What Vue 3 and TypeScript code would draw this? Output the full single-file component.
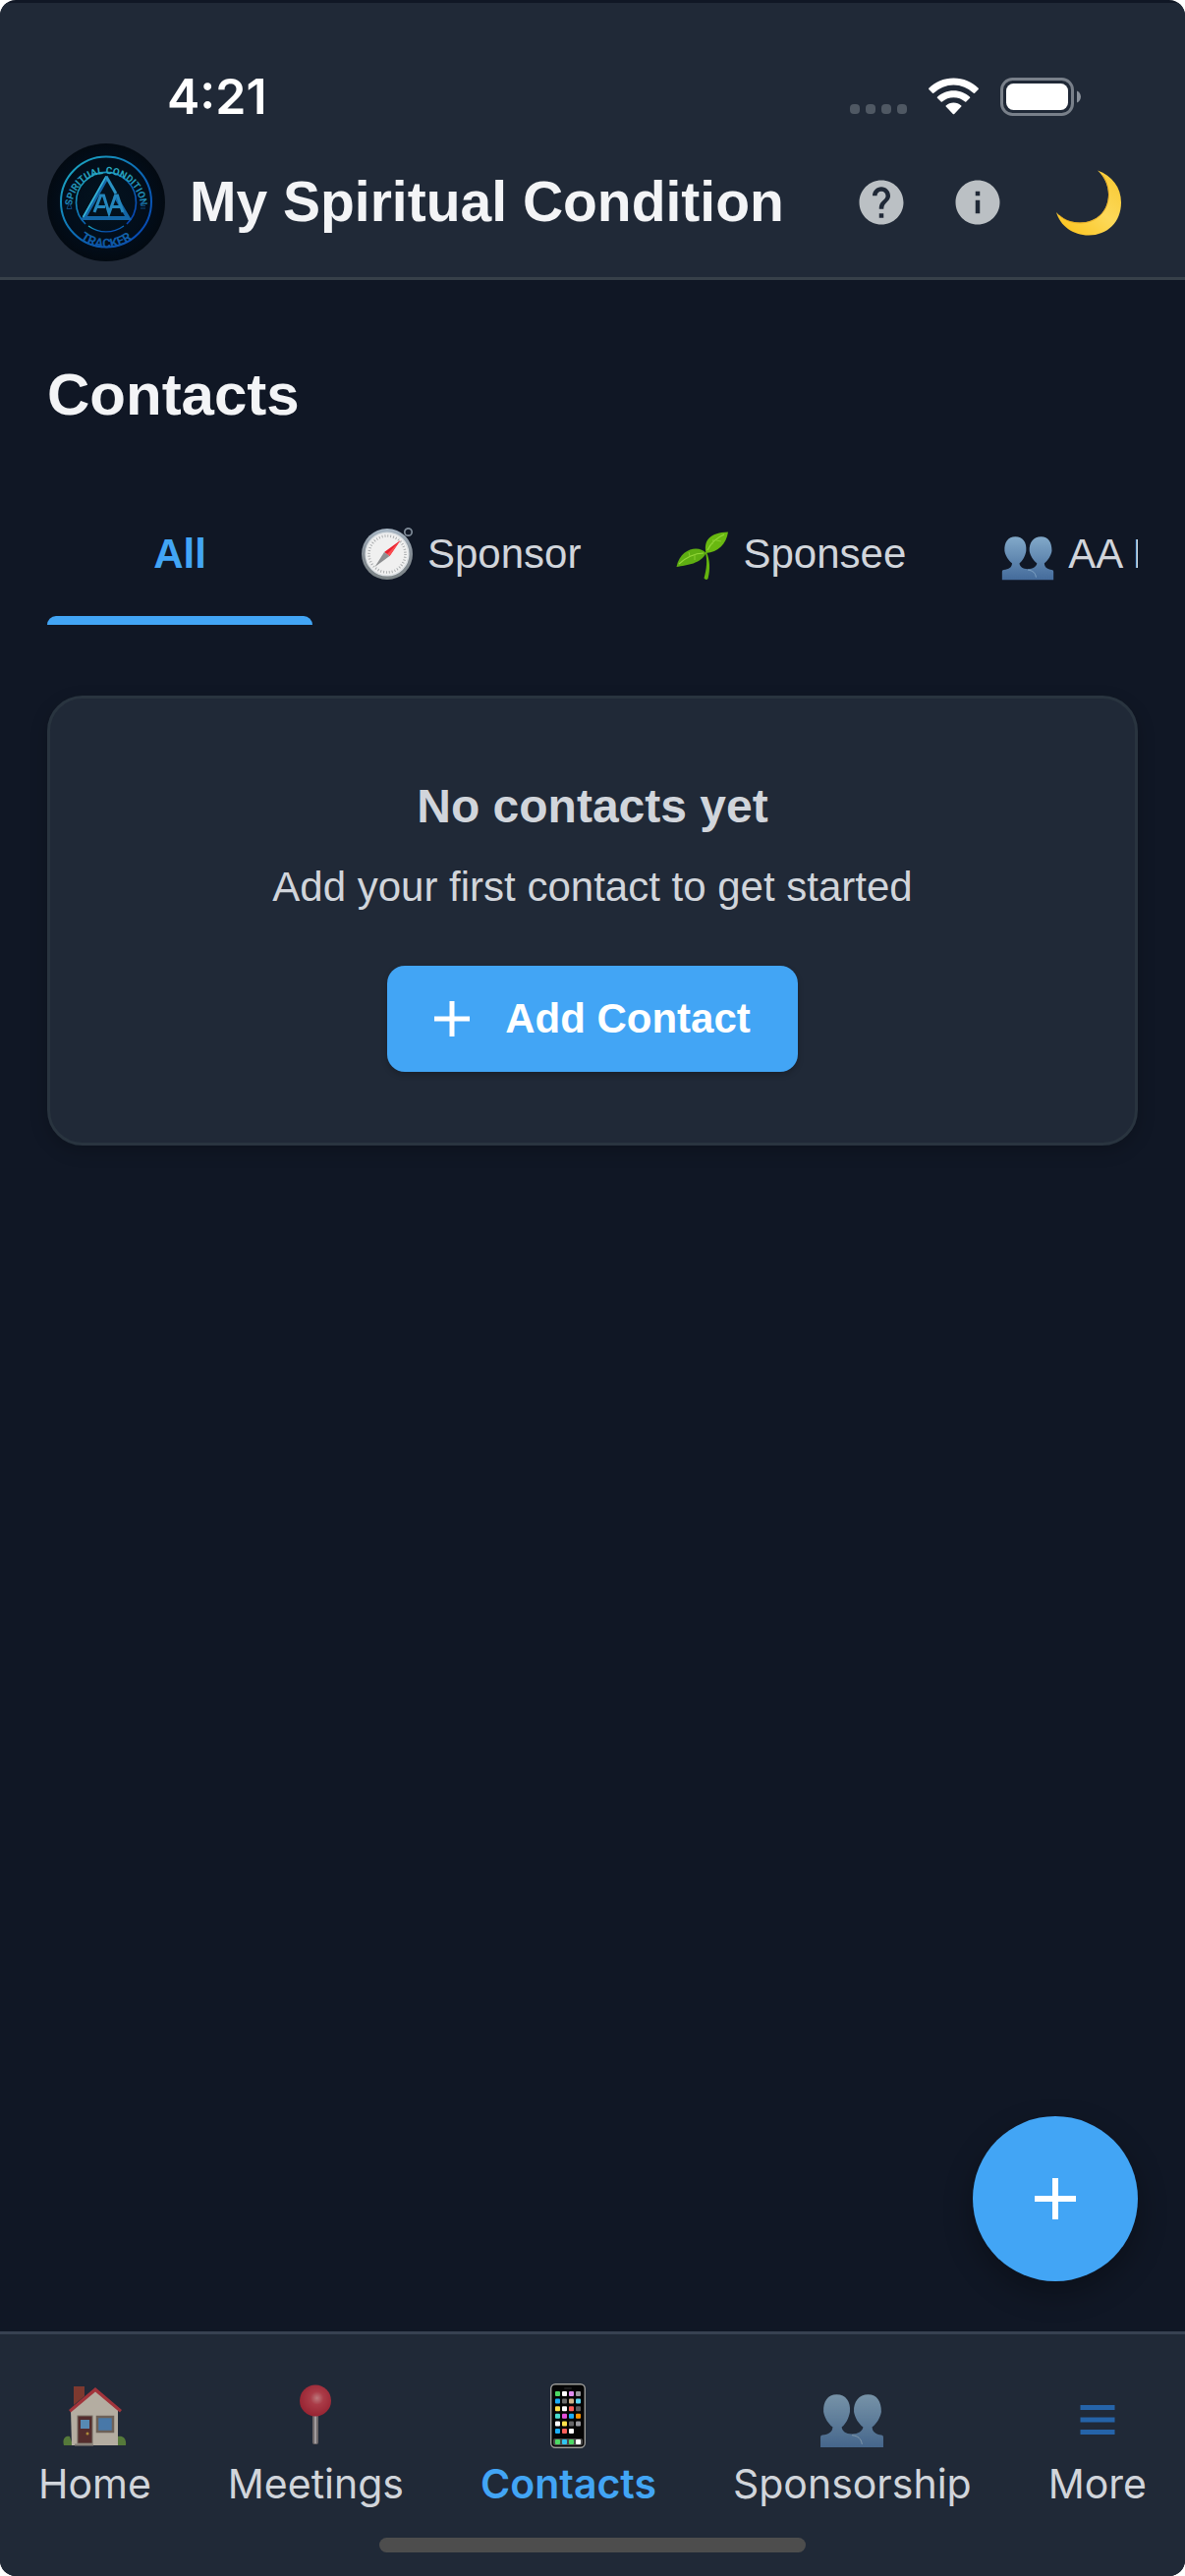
<script setup lang="ts">
import { ref } from 'vue'

interface Tab {
  id: string
  label: string
}

const tabs: Tab[] = [
  { id: 'all', label: 'All' },
  { id: 'sponsor', label: 'Sponsor' },
  { id: 'sponsee', label: 'Sponsee' },
  { id: 'member', label: 'AA Member' },
]

const navItems: Tab[] = [
  { id: 'home', label: 'Home' },
  { id: 'meetings', label: 'Meetings' },
  { id: 'contacts', label: 'Contacts' },
  { id: 'sponsorship', label: 'Sponsorship' },
  { id: 'more', label: 'More' },
]

const activeTab = ref('all')
const activePage = ref('contacts')

// Colours of the app tiles on the phone icon, row by row
const phoneRows: string[][] = [
  ['#4cd964', '#ffffff', '#e08cf0', '#98989d'],
  ['#1badf8', '#6b6b6b', '#d2b48c', '#5ad4f0'],
  ['#ffe14a', '#ffffff', '#ff5f5a', '#5c5c5e'],
  ['#4adfd0', '#e54fdc', '#1badf8', '#ff9500'],
  ['#ffffff', '#ffe14a', '#666668', '#98989d'],
  ['#1badf8', '#ff5f5a', '#ffffff'],
]
const phoneDock: string[] = ['#4cd964', '#30c4f0', '#4cd964', '#ffffff']
</script>

<template>
  <div class="app">
    <header class="header">
      <div class="status">
        <span class="clock">4:21</span>
        <div class="status-icons">
          <svg class="dots" viewBox="0 0 58 38" aria-hidden="true">
            <rect v-for="n in 4" :key="n" :x="(n - 1) * 16" y="27" width="10" height="10" rx="4" fill="#4f5863" />
          </svg>
          <svg class="wifi" viewBox="0 0 51 38" fill="#fff" aria-hidden="true">
            <path d="M25.500 0.500C35.500 0.500 44.300 4.400 50.700 10.700Q51.200 11.300 50.700 11.900L47 15.700Q46.400 16.200 45.800 15.700A29.500 29.500 0 0 0 5.200 15.700Q4.600 16.200 4 15.700L0.300 11.900Q-.2 11.300 .3 10.700C6.700 4.400 15.500 .5 25.500 .5Z" />
            <path d="M25.500 13.200C32 13.200 37.800 15.700 42.100 19.700Q42.600 20.200 42.100 20.800L38.300 24.600Q37.700 25.100 37.100 24.600A17.600 17.600 0 0 0 13.900 24.600Q13.300 25.100 12.700 24.600L8.900 20.800Q8.400 20.200 8.900 19.700C13.200 15.700 19 13.200 25.500 13.200Z" />
            <path d="M25.500 25.500C28.500 25.500 31.200 26.600 33.300 28.400Q33.900 29 33.300 29.600L26.200 36.900Q25.500 37.500 24.800 36.900L17.700 29.600Q17.100 29 17.700 28.400C19.800 26.600 22.500 25.500 25.500 25.500Z" />
          </svg>
          <svg class="battery" viewBox="0 0 82 39" aria-hidden="true">
            <rect x="1.500" y="1.500" width="72" height="36" rx="11" fill="none" stroke="#79808a" stroke-width="3" />
            <rect x="6" y="6" width="63" height="27" rx="7.500" fill="#fff" />
            <path d="M78 13.500C83.300 15.500 83.300 23.500 78 25.500Z" fill="#8a919b" />
          </svg>
        </div>
      </div>
      <div class="brand-row">
        <svg class="logo" viewBox="0 0 120 120" role="img" aria-label="Spiritual Condition Tracker">
          <defs>
            <radialGradient id="disc">
              <stop offset="0" stop-color="#03131f" />
              <stop offset=".75" stop-color="#020d1a" />
              <stop offset="1" stop-color="#030a12" />
            </radialGradient>
            <linearGradient id="ring" x1="0" y1="0" x2="1" y2="1">
              <stop offset="0" stop-color="#1fb2c4" />
              <stop offset=".55" stop-color="#0b66b4" />
              <stop offset="1" stop-color="#0640b4" />
            </linearGradient>
            <linearGradient id="lettering" gradientUnits="userSpaceOnUse" x1="0" y1="20" x2="0" y2="104">
              <stop offset="0" stop-color="#2cb0c2" />
              <stop offset="1" stop-color="#0e55a4" />
            </linearGradient>
            <path id="top-arc" d="M25 66A35 35 0 1 1 95 66" />
            <path id="bottom-arc" d="M17.500 72A43.500 43.500 0 0 0 102.500 72" />
          </defs>
          <circle cx="60" cy="60" r="60" fill="url(#disc)" />
          <circle cx="60" cy="59.500" r="46" fill="none" stroke="url(#ring)" stroke-width="2" />
          <path d="M39 82A30.500 30.500 0 1 1 81 82" fill="none" stroke="url(#ring)" stroke-width="1.600" />
          <path d="M42 84A30.500 30.500 0 0 0 78 84" fill="none" stroke="url(#ring)" stroke-width="1.400" />
          <text class="seal seal-top" fill="url(#lettering)" text-anchor="middle">
            <textPath href="#top-arc" startOffset="50%">SPIRITUAL CONDITION</textPath>
          </text>
          <text class="seal seal-bottom" fill="url(#lettering)" text-anchor="middle">
            <textPath href="#bottom-arc" startOffset="50%">TRACKER</textPath>
          </text>
          <path d="M60 36L37.500 76H82.500L69 53" fill="none" stroke="#1466a6" stroke-width="4" stroke-linejoin="miter" />
          <path d="M60 33.500L36.500 75" fill="none" stroke="#35b4d6" stroke-width="1.600" />
          <path d="M60 33.500L70 51" fill="none" stroke="#2a93c4" stroke-width="3" />
          <path d="M48 70L54.500 53H57.500L63 71L69.500 53H71.500L77 70M51 64.500H59M66 64.500H75" fill="none" stroke="#2487bd" stroke-width="3" />
          <path d="M20 66.500L22.500 60L25 66.500ZM95 61H100M95 63.500H100M95 66H100" fill="none" stroke="#0d477c" />
        </svg>
        <p class="brand">My Spiritual Condition</p>
        <div class="actions">
          <button class="icon-btn" type="button" aria-label="Help">
            <svg class="glyph" viewBox="0 0 24 24" fill="#bbc0c4">
              <path d="M12 2C6.480 2 2 6.480 2 12s4.480 10 10 10 10-4.480 10-10S17.520 2 12 2zm1 17h-2v-2h2v2zm2.070-7.750l-.9.920C13.450 12.900 13 13.500 13 15h-2v-.5c0-1.100.450-2.100 1.170-2.830l1.240-1.260c.370-.360.590-.860.590-1.410 0-1.100-.9-2-2-2s-2 .9-2 2H8c0-2.210 1.790-4 4-4s4 1.790 4 4c0 .880-.360 1.680-.930 2.250z" />
            </svg>
          </button>
          <button class="icon-btn" type="button" aria-label="About">
            <svg class="glyph" viewBox="0 0 24 24" fill="#bbc0c4">
              <path d="M12 2C6.480 2 2 6.480 2 12s4.480 10 10 10 10-4.480 10-10S17.520 2 12 2zm1 15h-2v-6h2v6zm0-8h-2V7h2v2z" />
            </svg>
          </button>
          <button class="icon-btn theme" type="button" aria-label="Dark mode">
            <svg class="moon" viewBox="0 0 66 67">
              <defs>
                <linearGradient id="moonlight" x1=".2" y1="1" x2="1" y2=".1">
                  <stop offset="0" stop-color="#fcc521" />
                  <stop offset=".5" stop-color="#fcd95a" />
                  <stop offset="1" stop-color="#f9c932" />
                </linearGradient>
              </defs>
              <path d="M42 .5C57 6 66 18 66 33C66 53 52 66.500 33 66.500C17 66.500 4 57 0 43C6 50 14 53.500 24 53.500C42 53.500 53 41 53 25C53 16 49 7 42 .5Z" fill="url(#moonlight)" />
              <path d="M3 46C9 51.500 16 54 24 54C42.300 54 53.500 41 53.500 25C53.500 18 51 10 47 5" fill="none" stroke="#e2a31e" stroke-width=".8" />
            </svg>
          </button>
        </div>
      </div>
    </header>

    <main class="main">
      <h1 class="title">Contacts</h1>

      <div class="tabs" role="tablist">
        <button
          v-for="tab in tabs"
          :key="tab.id"
          class="tab"
          :class="{ active: tab.id === activeTab }"
          type="button"
          role="tab"
          :aria-selected="tab.id === activeTab"
          @click="activeTab = tab.id"
        >
          <svg v-if="tab.id === 'sponsor'" class="tab-icon" viewBox="0 0 54 54" aria-hidden="true">
            <defs>
              <linearGradient id="rim" x1="0" y1="0" x2="0" y2="1">
                <stop offset="0" stop-color="#a9b8c6" />
                <stop offset=".5" stop-color="#848c94" />
                <stop offset="1" stop-color="#7d8588" />
              </linearGradient>
            </defs>
            <circle cx="48.500" cy="4.500" r="3.700" fill="none" stroke="#7f8b98" stroke-width="1.700" />
            <circle cx="27" cy="27" r="26" fill="url(#rim)" />
            <circle cx="27" cy="27" r="21.800" fill="#f0f0f0" stroke="#dfe3e6" stroke-width="1.500" />
            <circle cx="27" cy="27" r="18.500" fill="none" stroke="#a5a8aa" stroke-width="2.600" stroke-dasharray=".9 2" />
            <path d="M40.500 13L29.500 29L24 25Z" fill="#e8202f" />
            <path d="M40.500 13L29.500 29L27 27Z" fill="#fb4c50" />
            <path d="M24 25L29.500 29L14.500 40Z" fill="#8d8f91" />
          </svg>
          <svg v-else-if="tab.id === 'sponsee'" class="tab-icon" viewBox="0 0 54 54" aria-hidden="true">
            <path d="M29.500 25C32.500 32 31 43 28.500 51.500Q30.500 54 32.500 52C35 42 34.500 33 31 25Z" fill="#64b30f" />
            <path d="M30.500 26C27.500 13 35 5 53 4.500C51 17 43 25 30.500 26Z" fill="#69b811" />
            <path d="M30.500 26C24 18 5 20 .5 40C12 38 25 37 30.500 26Z" fill="#5fae12" />
            <path d="M32 23C36 15 42 10 49 7M28 26C19 26 9 31 3 37" fill="none" stroke="#94d83a" stroke-width="1.200" />
            <path d="M37 17L38 12M41 13L46 14M14 29L13 25M19 27L19 33" fill="none" stroke="#86cc2c" />
          </svg>
          <svg v-else-if="tab.id === 'member'" class="tab-icon" viewBox="0 0 64 64" aria-hidden="true">
            <defs>
              <linearGradient id="people-tab" x1="0" y1="0" x2="0" y2="1">
                <stop offset="0" stop-color="#82a9c9" />
                <stop offset="1" stop-color="#446b9b" />
              </linearGradient>
            </defs>
            <path d="M1 63V53Q1 51 3 51C9 50.500 13 48 13 43C9 40 5 34 4 28C3.500 18 8 11 17 11C26 11 31 18 30 28C29 34 26 40 22 43C22 47 26 50 32 50C38 50 43 47 43 43C39 40 35 34 34 28C33.500 18 39 11 48 11C57 11 61 18 61 28C60 34 56 40 52 43C52 48 56 50.500 61 51Q63 51 63 53V63Z" fill="url(#people-tab)" />
            <path d="M32 51C38 52 41 54 42 60" fill="none" stroke="#8eb0cd" stroke-width=".9" />
          </svg>
          <span>{{ tab.label }}</span>
        </button>
      </div>

      <section class="card">
        <h2 class="card-title">No contacts yet</h2>
        <p class="card-text">Add your first contact to get started</p>
        <button class="add-btn" type="button">
          <svg class="add-icon" viewBox="0 0 36 36" aria-hidden="true">
            <path d="M18 0V36M0 18H36" stroke="#fff" stroke-width="5" />
          </svg>
          <span>Add Contact</span>
        </button>
      </section>

      <button class="fab" type="button" aria-label="Add contact">
        <svg class="fab-icon" viewBox="0 0 42 42">
          <path d="M21 0V42M0 21H42" stroke="#fff" stroke-width="6" />
        </svg>
      </button>
    </main>

    <footer class="footer">
      <nav class="nav">
        <a
          v-for="item in navItems"
          :key="item.id"
          class="nav-item"
          :class="{ active: item.id === activePage }"
          :href="'#' + item.id"
          @click="activePage = item.id"
        >
          <svg v-if="item.id === 'home'" class="nav-icon" viewBox="0 0 66 66" aria-hidden="true">
            <path d="M2 63C0 56 4 53 8 54L11 63ZM65 63C66 56 62 53 57 54V63Z" fill="#6c9c3c" />
            <path d="M12 3H23V13L12 22Z" fill="#a5402c" />
            <path d="M9 27L34 6L57 27V63H10Z" fill="#f3e6cf" />
            <path d="M7 27L34 4L61 27L59 29.500L34 8.500L9 29.500Z" fill="#d93a3e" />
            <rect x="16" y="33" width="15" height="28" fill="#6b3029" stroke="#9b8a78" />
            <rect x="19" y="37" width="9" height="9" fill="#6fb3e8" />
            <circle cx="26" cy="51" r="1.500" fill="#e8b23c" />
            <rect x="36" y="34" width="16" height="15" fill="#5a9ad8" stroke="#8e7a66" stroke-width="2.500" />
            <path d="M13 62.500H32" stroke="#b3a796" stroke-width="2" />
          </svg>
          <svg v-else-if="item.id === 'meetings'" class="nav-icon" viewBox="0 0 66 66" aria-hidden="true">
            <defs>
              <radialGradient id="pin" cx=".55" cy=".42" r=".6">
                <stop offset="0" stop-color="#ff9c9c" />
                <stop offset=".35" stop-color="#e5444f" />
                <stop offset="1" stop-color="#c9202f" />
              </radialGradient>
            </defs>
            <rect x="30" y="30" width="6" height="32" rx="2" fill="#8e8380" />
            <rect x="32" y="32" width="2" height="29" fill="#d8cdca" />
            <circle cx="33" cy="17.500" r="16" fill="url(#pin)" />
          </svg>
          <svg v-else-if="item.id === 'contacts'" class="nav-icon" viewBox="0 0 66 66" aria-hidden="true">
            <rect x="15.700" y=".7" width="34.600" height="64.600" rx="4.500" fill="#050505" stroke="#9b9b98" stroke-width="1.400" />
            <rect x="29" y="4" width="8" height="2" rx="1" fill="#1c1c1c" />
            <rect x="18" y="56" width="30" height="7" rx="2" fill="#4a4a4a" />
            <template v-for="(row, r) in phoneRows" :key="r">
              <rect
                v-for="(color, c) in row"
                :key="c"
                :x="20 + c * 7"
                :y="8 + r * 7.600"
                width="5"
                height="5"
                rx="1"
                :fill="color"
              />
            </template>
            <rect v-for="(color, c) in phoneDock" :key="'d' + c" :x="20 + c * 7" y="57" width="5" height="5" rx="1" :fill="color" />
          </svg>
          <svg v-else-if="item.id === 'sponsorship'" class="nav-icon" viewBox="0 0 64 64" aria-hidden="true">
            <defs>
              <linearGradient id="people-nav" x1="0" y1="0" x2="0" y2="1">
                <stop offset="0" stop-color="#9cc0d8" />
                <stop offset="1" stop-color="#5681b0" />
              </linearGradient>
            </defs>
            <path d="M1 63V53Q1 51 3 51C9 50.500 13 48 13 43C9 40 5 34 4 28C3.500 18 8 11 17 11C26 11 31 18 30 28C29 34 26 40 22 43C22 47 26 50 32 50C38 50 43 47 43 43C39 40 35 34 34 28C33.500 18 39 11 48 11C57 11 61 18 61 28C60 34 56 40 52 43C52 48 56 50.500 61 51Q63 51 63 53V63Z" fill="url(#people-nav)" />
            <path d="M32 51C38 52 41 54 42 60" fill="none" stroke="#b0cade" stroke-width=".9" />
          </svg>
          <svg v-else class="nav-icon more" viewBox="0 0 66 66" aria-hidden="true">
            <path d="M15.500 24.500H50.500M15.500 37H50.500M15.500 49.500H50.500" stroke="#2563a8" stroke-width="5" />
          </svg>
          <span class="nav-label">{{ item.label }}</span>
        </a>
      </nav>
      <div class="home-indicator"></div>
    </footer>
  </div>
</template>

<style>
body {
  margin: 0;
  background: #fff;
}
</style>

<style scoped>
.app {
  box-sizing: border-box;
  display: flex;
  flex-direction: column;
  min-height: 100vh;
  padding-top: 3px;
  overflow: hidden;
  border-radius: 16px;
  background: #101725;
  font-family: "Liberation Sans", Arial, sans-serif;
}

button {
  margin: 0;
  padding: 0;
  border: 0;
  background: none;
  color: inherit;
  font-family: inherit;
  cursor: pointer;
}

svg {
  display: block;
  flex: none;
}

.header {
  padding: 47px 48px 16px;
  border-bottom: 3px solid #374049;
  background: #202937;
}

.status {
  display: flex;
  align-items: center;
  justify-content: space-between;
  height: 96px;
  padding: 0 58px 0 122px;
}

.clock {
  color: #fff;
  font: 600 50px/60px Inter, sans-serif;
}

.status-icons {
  display: flex;
  align-items: center;
  gap: 22px;
}

.dots {
  width: 58px;
  height: 38px;
}

.wifi {
  width: 51px;
  height: 38px;
}

.battery {
  width: 82px;
  height: 39px;
}

.brand-row {
  display: flex;
  align-items: center;
}

.logo {
  width: 120px;
  height: 120px;
}

.seal {
  font-family: "Liberation Sans Narrow", Roboto, sans-serif;
  font-weight: 700;
}

.seal-top {
  font-size: 10px;
}

.seal-bottom {
  font-size: 13px;
}

.brand {
  margin: 0 0 3px 25px;
  color: #f3f4f6;
  font-size: 57px;
  font-weight: 700;
  line-height: 72px;
  white-space: nowrap;
}

.actions {
  display: flex;
  align-items: center;
  margin-left: auto;
}

.icon-btn {
  display: flex;
  align-items: center;
  justify-content: center;
  width: 98px;
  height: 98px;
}

.icon-btn.theme {
  width: 100px;
  margin-left: 14px;
}

.glyph {
  width: 54px;
  height: 54px;
}

.moon {
  width: 66px;
  height: 67px;
}

.main {
  position: relative;
  flex: 1;
  padding: 81px 48px 48px;
}

.title {
  margin: 0 0 54px;
  color: #f3f4f6;
  font-size: 60px;
  font-weight: 700;
  line-height: 72px;
}

.tabs {
  display: flex;
  gap: 1px;
  overflow: hidden;
}

.tab {
  display: flex;
  flex: none;
  align-items: center;
  justify-content: center;
  gap: 14px;
  box-sizing: border-box;
  min-width: 270px;
  height: 144px;
  padding: 0 48px;
  color: #d1d5db;
  font-size: 42px;
  line-height: 48px;
  white-space: nowrap;
}

.tab.active {
  position: relative;
  color: #42a5f5;
  font-weight: 700;
}

.tab.active::after {
  position: absolute;
  right: 0;
  bottom: 0;
  left: 0;
  height: 9px;
  border-radius: 9px 9px 0 0;
  background: #42a5f5;
  content: "";
}

.tab-icon {
  width: 54px;
  height: 54px;
}

.card {
  display: flex;
  flex-direction: column;
  align-items: center;
  margin-top: 72px;
  padding: 82px 48px 72px;
  border: 3px solid #29343f;
  border-radius: 36px;
  background: #202937;
  box-shadow: 0 6px 18px rgba(0, 0, 0, 0.2);
}

.card-title {
  margin: 0 0 24px;
  color: #d1d5db;
  font-size: 48px;
  font-weight: 700;
  line-height: 56px;
}

.card-text {
  margin: 0 0 50px;
  color: #d1d5db;
  font-size: 42px;
  line-height: 60px;
}

.add-btn {
  display: flex;
  align-items: center;
  gap: 36px;
  height: 108px;
  padding: 0 48px;
  border-radius: 18px;
  background: #42a5f5;
  box-shadow: 0 3px 6px rgba(0, 0, 0, 0.2);
  color: #fff;
  font-size: 42px;
  font-weight: 700;
  line-height: 48px;
}

.add-icon {
  width: 36px;
  height: 36px;
}

.fab {
  position: absolute;
  right: 48px;
  bottom: 51px;
  display: flex;
  align-items: center;
  justify-content: center;
  width: 168px;
  height: 168px;
  border-radius: 50%;
  background: #42a5f5;
  box-shadow: 0 12px 30px rgba(0, 0, 0, 0.3);
}

.fab-icon {
  width: 42px;
  height: 42px;
}

.footer {
  padding: 50px 0 24px;
  border-top: 3px solid #374151;
  background: #202937;
}

.nav {
  display: flex;
  justify-content: space-around;
}

.nav-item {
  display: flex;
  flex-direction: column;
  align-items: center;
  gap: 12px;
  color: #d1d5db;
  text-decoration: none;
}

.nav-icon {
  width: 66px;
  height: 66px;
  opacity: 0.7;
}

.nav-icon.more,
.nav-item.active .nav-icon {
  opacity: 1;
}

.nav-label {
  font: 400 41px/48px Inter, sans-serif;
}

.nav-item.active .nav-label {
  color: #42a5f5;
  font-weight: 600;
}

.home-indicator {
  width: 36%;
  height: 15px;
  margin: 31px auto 0;
  border-radius: 8px;
  background: #4d4d4d;
}
</style>
